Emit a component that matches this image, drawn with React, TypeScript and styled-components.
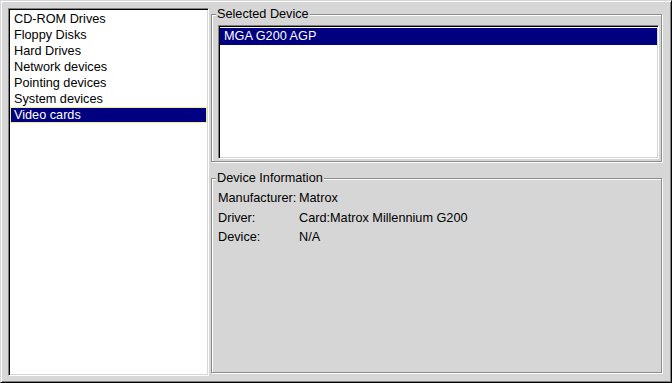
import React from "react";
import styled, { createGlobalStyle } from "styled-components";

const Global = createGlobalStyle`
  html, body { margin: 0; padding: 0; background: #d6d6d6; }
  body {
    font-family: "Liberation Sans", Arial, Helvetica, sans-serif;
    font-size: 12.7px;
    color: #000;
  }
`;

const Window = styled.div`
  box-sizing: border-box;
  width: 672px;
  height: 383px;
  background: #d6d6d6;
  border: 1px solid;
  border-color: #d6d6d6 #000 #000 #d6d6d6;
  box-shadow: inset 1px 1px 0 #fff, inset -1px -1px 0 #808080;
  padding: 7px 8px 6px 7px;
  display: flex;
  gap: 2px;
`;

const ListBox = styled.div<{ $width?: number; $height?: number }>`
  box-sizing: border-box;
  width: ${(p) => (p.$width ? `${p.$width}px` : "auto")};
  height: ${(p) => (p.$height ? `${p.$height}px` : "auto")};
  background: #fff;
  border: 1px solid;
  border-color: #808080 #fff #fff #808080;
  box-shadow: inset 1px 1px 0 #000, inset -1px -1px 0 #d6d6d6;
  padding: 2px 1px 1px 1px;
  display: flex;
  flex-direction: column;
  overflow: hidden;
`;

const Row = styled.div<{ $selected?: boolean; $focused?: boolean; $tall?: boolean }>`
  box-sizing: border-box;
  height: ${(p) => (p.$tall ? "17px" : "16px")};
  line-height: ${(p) => (p.$tall ? "17px" : "16px")};
  padding-left: 4px;
  white-space: nowrap;
  background: ${(p) => (p.$selected ? "#000080" : "transparent")};
  color: ${(p) => (p.$selected ? "#fff" : "#000")};
  box-shadow: ${(p) => (p.$focused ? "inset 0 0 0 1px #f0f096" : "none")};
`;

const Column = styled.div`
  flex: 1;
  display: flex;
  flex-direction: column;
  padding: 6px 1px 3px 0;
  gap: 16px;
`;

const Group = styled.div<{ $grow?: boolean }>`
  position: relative;
  box-sizing: border-box;
  border: 1px solid #8c8c8c;
  box-shadow: inset 1px 1px 0 #fff, 1px 1px 0 #fff;
  flex: ${(p) => (p.$grow ? "1" : "none")};
  padding: ${(p) => (p.$grow ? "10px 6px" : "10px 2px 2px 6px")};
`;

const GroupTitle = styled.span`
  position: absolute;
  top: -9px;
  left: 4px;
  padding: 0 1px;
  line-height: 16px;
  background: #d6d6d6;
  white-space: nowrap;
`;

const InfoGrid = styled.div`
  display: grid;
  grid-template-columns: 81px 1fr;
  grid-auto-rows: 19.5px;
  line-height: 19.5px;
  white-space: nowrap;
`;

const categories = [
  "CD-ROM Drives",
  "Floppy Disks",
  "Hard Drives",
  "Network devices",
  "Pointing devices",
  "System devices",
  "Video cards",
];

const info: [string, string][] = [
  ["Manufacturer:", "Matrox"],
  ["Driver:", "Card:Matrox Millennium G200"],
  ["Device:", "N/A"],
];

export default function App() {
  return (
    <>
      <Global />
      <Window>
        <ListBox $width={201}>
          {categories.map((c) => (
            <Row key={c} $selected={c === "Video cards"} $focused={c === "Video cards"}>
              {c}
            </Row>
          ))}
        </ListBox>
        <Column>
          <Group>
            <GroupTitle>Selected Device</GroupTitle>
            <ListBox $height={134}>
              <Row $selected $tall>
                MGA G200 AGP
              </Row>
            </ListBox>
          </Group>
          <Group $grow>
            <GroupTitle>Device Information</GroupTitle>
            <InfoGrid>
              {info.map(([k, v]) => (
                <React.Fragment key={k}>
                  <span>{k}</span>
                  <span>{v}</span>
                </React.Fragment>
              ))}
            </InfoGrid>
          </Group>
        </Column>
      </Window>
    </>
  );
}
